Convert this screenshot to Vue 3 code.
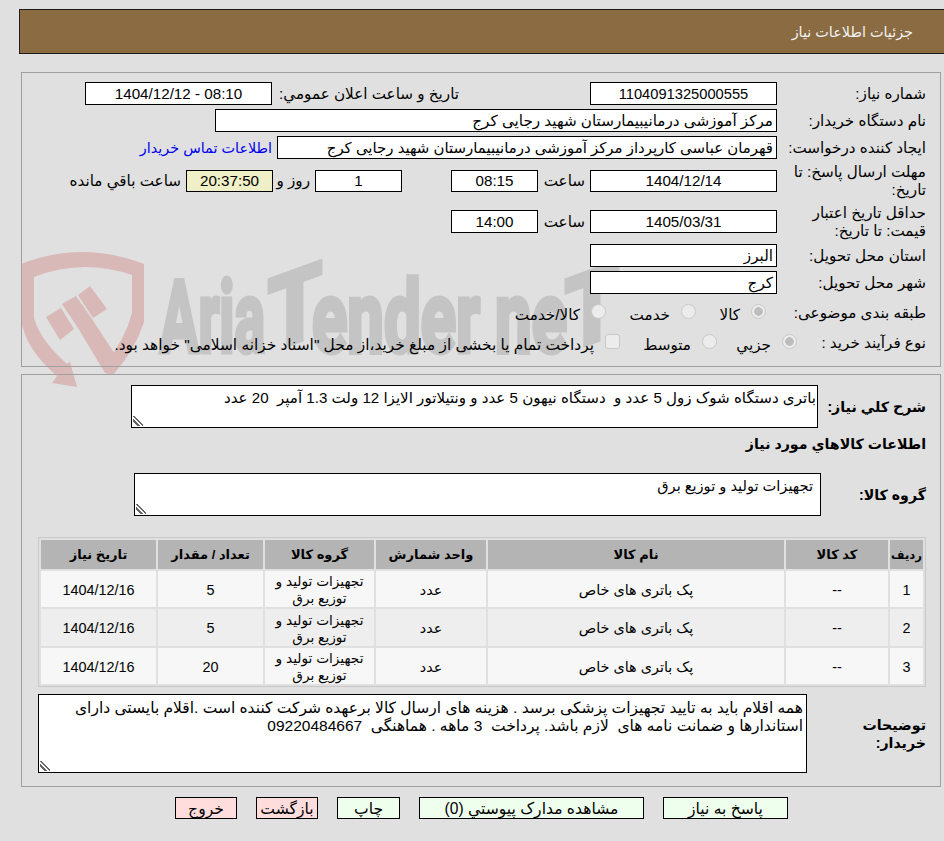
<script setup>
const rows = [
  { n: 1, alt: false },
  { n: 2, alt: true },
  { n: 3, alt: false }
]
const qty = { 1: 5, 2: 5, 3: 20 }
const desc = 'باتری دستگاه شوک زول 5 عدد و  دستگاه نیهون 5 عدد و ونتیلاتور الایزا 12 ولت 1.3 آمپر  20 عدد'
const notes = 'همه اقلام باید به تایید تجهیزات پزشکی برسد . هزینه های ارسال کالا برعهده شرکت کننده است .اقلام بایستی دارای استاندارها و ضمانت نامه های  لازم باشد. پرداخت  3 ماهه . هماهنگی  09220484667'
</script>

<template>
  <div class="page" dir="rtl">
    <svg class="mark" width="944" height="400" viewBox="0 240 944 400" aria-hidden="true">
      <g fill="#d9b8b8">
        <path fill-rule="evenodd" d="M21 264 Q82 240 144 264 L144 322 Q135 350 113 375 L105 364 Q125 340 132 313 L132 275 Q82 258 34 277 L34 318 Q40 340 67 364 L70 362 L77 387 L52 383 L57 376 Q26 350 21 320 Z" />
        <polygon points="46,317 61,308 74,329 60,340" />
        <polygon points="62,304 76,296 92,319 120,362 113,375 105,373 78,328" />
        <polygon points="78,295 90,286 107,309 93,318" />
      </g>
      <g class="mark-text">
        <text x="160" y="352" textLength="105" lengthAdjust="spacingAndGlyphs">Aria</text>
        <text x="268" y="352" textLength="54" lengthAdjust="spacingAndGlyphs" transform="translate(268 293) skewY(-20) translate(-268 -293)">T</text>
        <text x="312" y="352" textLength="168" lengthAdjust="spacingAndGlyphs">ender</text>
        <text x="495" y="352" textLength="72" lengthAdjust="spacingAndGlyphs">ne</text>
        <text x="565" y="352" textLength="54" lengthAdjust="spacingAndGlyphs" transform="translate(565 293) skewY(-20) translate(-565 -293)">T</text>
      </g>
    </svg>

    <header class="head">جزئیات اطلاعات نیاز</header>

    <section class="panel first">
      <div class="row">
        <div class="lab">شماره نیاز:</div>
        <div class="box w187 center tight">1104091325000555</div>
        <div class="mid">تاریخ و ساعت اعلان عمومي:</div>
        <div class="box w187 center">08:10 - 1404/12/12</div>
      </div>
      <div class="row">
        <div class="lab">نام دستگاه خریدار:</div>
        <div class="box w562">مرکز آموزشی درمانیبیمارستان شهید رجایی کرج</div>
      </div>
      <div class="row">
        <div class="lab">ایجاد کننده درخواست:</div>
        <div class="box w500 snug">قهرمان عباسی کارپرداز مرکز آموزشی درمانیبیمارستان شهید رجایی کرج</div>
        <a class="link">اطلاعات تماس خریدار</a>
      </div>
      <div class="row tall">
        <div class="lab">مهلت ارسال پاسخ: تا تاریخ:</div>
        <div class="box w187 center short">1404/12/14</div>
        <div class="cap w52">ساعت</div>
        <div class="box w87 center short">08:15</div>
        <div class="box w87 center short day">1</div>
        <div class="cap w42">روز و</div>
        <div class="box w87 center short timer">20:37:50</div>
        <div class="cap">ساعت باقي مانده</div>
      </div>
      <div class="row tall2">
        <div class="lab">حداقل تاریخ اعتبار قیمت: تا تاریخ:</div>
        <div class="box w187 center">1405/03/31</div>
        <div class="cap w52">ساعت</div>
        <div class="box w87 center">14:00</div>
      </div>
      <div class="row">
        <div class="lab">استان محل تحویل:</div>
        <div class="box w187">البرز</div>
      </div>
      <div class="row">
        <div class="lab">شهر محل تحویل:</div>
        <div class="box w187">کرج</div>
      </div>
      <div class="row opts">
        <div class="lab">طبقه بندی موضوعی:</div>
        <label class="opt o70 first-opt"><input type="radio" name="a" checked disabled /><span>کالا</span></label>
        <label class="opt o90"><input type="radio" name="a" disabled /><span>خدمت</span></label>
        <label class="opt"><input type="radio" name="a" disabled /><span>کالا/خدمت</span></label>
      </div>
      <div class="row opts2">
        <div class="lab">نوع فرآیند خرید :</div>
        <label class="opt o80 first-opt2"><input type="radio" name="b" checked disabled /><span>جزیي</span></label>
        <label class="opt o97"><input type="radio" name="b" disabled /><span>متوسط</span></label>
        <label class="opt"><input type="checkbox" disabled /><span class="wide">پرداخت تمام یا بخشی از مبلغ خرید،از محل "اسناد خزانه اسلامی" خواهد بود.</span></label>
      </div>
    </section>

    <section class="panel second">
      <div class="line">
        <div class="blab w109">شرح کلي نیاز:</div>
        <div class="area a1">{{ desc }}</div>
      </div>
      <div class="title">اطلاعات کالاهاي مورد نیاز</div>
      <div class="line">
        <div class="blab w106">گروه کالا:</div>
        <div class="area a2">تجهیزات تولید و توزیع برق</div>
      </div>
      <table class="grid">
        <colgroup>
          <col class="c1" /><col class="c2" /><col class="c3" /><col class="c4" /><col class="c5" /><col class="c6" /><col class="c7" />
        </colgroup>
        <thead>
          <tr>
            <th>ردیف</th><th>کد کالا</th><th>نام کالا</th><th>واحد شمارش</th><th>گروه کالا</th><th>تعداد / مقدار</th><th>تاریخ نیاز</th>
          </tr>
        </thead>
        <tbody>
          <tr v-for="r in rows" :key="r.n" :class="{ alt: r.alt }">
            <td>{{ r.n }}</td>
            <td>--</td>
            <td>پک باتری های خاص</td>
            <td>عدد</td>
            <td class="grp">تجهیزات تولید و توزیع برق</td>
            <td>{{ qty[r.n] }}</td>
            <td>1404/12/16</td>
          </tr>
        </tbody>
      </table>
      <div class="line notes">
        <div class="blab w120">توضیحات خریدار:</div>
        <div class="area a3">{{ notes }}</div>
      </div>
    </section>

    <div class="actions">
      <button class="btn ok b125">پاسخ به نیاز</button>
      <button class="btn ok b225">مشاهده مدارک پیوستي (0)</button>
      <button class="btn ok b63">چاپ</button>
      <button class="btn no b62">بازگشت</button>
      <button class="btn no b62">خروج</button>
    </div>
  </div>
</template>

<style>
html, body { background: #e0e0e0; }
</style>

<style scoped>
.page {
  position: relative;
  width: 944px;
  height: 841px;
  overflow: hidden;
  padding-top: 9px;
  box-sizing: border-box;
  background: #e0e0e0;
  color: #000;
  font-family: "Liberation Sans", "DejaVu Sans", sans-serif;
  font-size: 15.2px;
  line-height: 18px;
}
.mark { position: absolute; left: 0; top: 240px; direction: ltr; }
.mark-text text {
  font-family: Roboto, sans-serif;
  font-weight: 700;
  font-size: 100px;
  fill: #c4c4c4;
  stroke: #c4c4c4;
  stroke-width: 5px;
  direction: ltr;
}
.head, .panel, .actions { position: relative; }
.head {
  margin-left: 19px;
  height: 45px;
  box-sizing: border-box;
  border: 1px solid #1c1c1c;
  border-right: 0;
  background: #8b6b41;
  color: #f2f2f2;
  padding: 13px 31px 0 0;
  font-size: 14.4px;
}
.panel {
  margin-right: 3px;
  width: 920px;
  box-sizing: border-box;
  border: 1px solid #a0a0a0;
  padding-right: 13px;
}
.first { margin-top: 18px; padding-top: 9px; height: 295px; }
.second { margin-top: 7px; padding-top: 10px; height: 413px; }
.row { display: flex; align-items: center; margin-bottom: 4px; height: 23px; }
.tall { height: 36px; }
.tall2 { height: 37px; }
.opts { height: 28px; }
.opts2 { height: 24px; }
.lab { width: 150px; flex: none; box-sizing: border-box; padding-right: 1px; }
.opts .lab, .opts2 .lab { padding-top: 2px; }
.box {
  height: 23px;
  box-sizing: border-box;
  border: 1px solid #000;
  background: #fff;
  padding: 2px 3px 0;
  white-space: nowrap;
  overflow: hidden;
  flex: none;
}
.tight { font-size: 14.7px; }
.snug { font-size: 14.95px; }
.short { height: 22px; padding-top: 1px; }
.center { text-align: center; }
.w187 { width: 187px; }
.w562 { width: 562px; }
.w500 { width: 500px; }
.w87 { width: 87px; }
.mid { width: 318px; box-sizing: border-box; padding-right: 131px; flex: none; }
.link { margin-right: 5px; color: #0000ee; font-size: 14.4px; }
.cap { padding-right: 5px; flex: none; box-sizing: border-box; }
.w52 { width: 52px; }
.w42 { width: 42px; }
.day { margin-right: 49px; }
.timer { background: #f0f0c8; }
.opt { display: flex; align-items: center; gap: 11px; flex: none; }
.opt input {
  appearance: none;
  box-sizing: border-box;
  width: 15px;
  height: 15px;
  margin: 0;
  flex: none;
  border: 1px solid #c8c8c8;
  background: #ececec;
  position: relative;
  top: -1px;
}
.opt input[type="radio"] { border-radius: 50%; }
.opt input[type="checkbox"] { border-radius: 3px; }
.opt input:checked { background: radial-gradient(circle, #bdbdbd 0 4px, #ececec 4.6px); }
.opt span { margin-top: 5px; }
.opt .wide { font-size: 15.4px; }
.o70 { width: 70px; }
.o90 { width: 90px; }
.o80 { width: 80px; }
.o97 { width: 97px; }
.first-opt { margin-right: 11px; }
.first-opt2 { margin-right: -20px; }
.line { display: flex; align-items: center; }
.blab { font-weight: 700; font-size: 14.2px; flex: none; box-sizing: border-box; padding-right: 1px; }
.w109 { width: 109px; }
.w106 { width: 106px; }
.w120 { width: 120px; padding-left: 40px; }
.area {
  box-sizing: border-box;
  border: 1px solid #000;
  background: #fff linear-gradient(45deg, transparent 24%, #666 24% 36%, transparent 36% 46%, #666 46% 58%, transparent 58%) no-repeat left 1px bottom 1px / 10px 10px;
  height: 43px;
  white-space: pre-wrap;
  overflow: hidden;
  flex: none;
}
.a1 { width: 687px; padding: 3px 1px 0; font-size: 15.1px; }
.a2 { width: 687px; padding: 3px 7px 0; font-size: 14.6px; }
.a3 { width: 769px; height: 79px; padding: 4px 3px 0 20px; font-size: 15.5px; }
.title { font-weight: 700; font-size: 14.2px; margin: 7px 1px 20px 0; }
.grid {
  margin-top: 21px;
  margin-right: 1px;
  width: 888px;
  table-layout: fixed;
  border: 1px solid #c9c9c9;
  border-collapse: separate;
  border-spacing: 2px;
  font-size: 14.4px;
  text-align: center;
}
.grid th {
  background: #b4b4b4;
  height: 29px;
  padding: 0;
  font-size: 13px;
  font-weight: 700;
}
.grid th:first-child { font-size: 11.6px; }
.grid td { background: #f7f7f7; height: 34px; padding: 2px 0 0; line-height: 17px; }
.grid .alt td { background: #eeeeee; height: 35px; }
.grid .grp { font-size: 13.7px; }
.c1 { width: 33px; }
.c2 { width: 102px; }
.c3 { width: 296px; }
.c4 { width: 110px; }
.c5 { width: 109px; }
.c6 { width: 105px; }
.c7 { width: 115px; }
.notes { margin-top: 7px; }
.actions {
  display: flex;
  gap: 19px;
  margin: 10px 156px 0 0;
}
.btn {
  height: 22px;
  box-sizing: border-box;
  border: 1px solid #000;
  padding: 1px 0 0;
  font: inherit;
  font-size: 15.6px;
  color: #000;
}
.ok { background: #eeffee; }
.no { background: #ffdddd; }
.b125 { width: 125px; }
.b225 { width: 225px; }
.b63 { width: 63px; }
.b62 { width: 62px; }
</style>
